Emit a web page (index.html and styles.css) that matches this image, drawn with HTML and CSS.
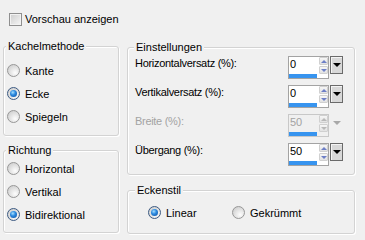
FILE: index.html
```html
<!DOCTYPE html>
<html lang="de">
<head>
    <meta charset="UTF-8">
    <title>Kacheln</title>
    <link rel="stylesheet" href="styles.css">
</head>
<body>
    <div class="dialog">
        <div class="check-row"><span class="check"></span>Vorschau anzeigen</div>

        <div class="panels">
            <div class="col-left">
                <div class="group group-tiling">
                    <span class="group-title">Kachelmethode</span>
                    <div class="radio-row"><span class="radio"></span>Kante</div>
                    <div class="radio-row"><span class="radio checked"></span>Ecke</div>
                    <div class="radio-row"><span class="radio"></span>Spiegeln</div>
                </div>
                <div class="group group-direction">
                    <span class="group-title">Richtung</span>
                    <div class="radio-row"><span class="radio"></span>Horizontal</div>
                    <div class="radio-row"><span class="radio"></span>Vertikal</div>
                    <div class="radio-row"><span class="radio checked"></span>Bidirektional</div>
                </div>
            </div>

            <div class="col-right">
                <div class="group group-settings">
                    <span class="group-title">Einstellungen</span>
                    <div class="field-row">
                        <span class="field-label">Horizontalversatz (%):</span>
                        <div class="spin">
                            <div class="spin-box">
                                <span class="spin-value">0</span>
                                <div class="spin-arrows"><span class="arrow-up"></span><span class="arrow-down"></span></div>
                                <div class="spin-bar"></div>
                            </div>
                            <span class="drop-btn"></span>
                        </div>
                    </div>
                    <div class="field-row">
                        <span class="field-label">Vertikalversatz (%):</span>
                        <div class="spin">
                            <div class="spin-box">
                                <span class="spin-value">0</span>
                                <div class="spin-arrows"><span class="arrow-up"></span><span class="arrow-down"></span></div>
                                <div class="spin-bar"></div>
                            </div>
                            <span class="drop-btn"></span>
                        </div>
                    </div>
                    <div class="field-row disabled">
                        <span class="field-label">Breite (%):</span>
                        <div class="spin">
                            <div class="spin-box">
                                <span class="spin-value">50</span>
                                <div class="spin-arrows"><span class="arrow-up"></span><span class="arrow-down"></span></div>
                                <div class="spin-bar"></div>
                            </div>
                            <span class="drop-btn"></span>
                        </div>
                    </div>
                    <div class="field-row">
                        <span class="field-label">Übergang (%):</span>
                        <div class="spin">
                            <div class="spin-box">
                                <span class="spin-value">50</span>
                                <div class="spin-arrows"><span class="arrow-up"></span><span class="arrow-down"></span></div>
                                <div class="spin-bar"></div>
                            </div>
                            <span class="drop-btn"></span>
                        </div>
                    </div>
                </div>

                <div class="group group-corner">
                    <span class="group-title">Eckenstil</span>
                    <div class="corner-row">
                        <div class="radio-row corner-item"><span class="radio checked"></span>Linear</div>
                        <div class="radio-row"><span class="radio"></span>Gekrümmt</div>
                    </div>
                </div>
            </div>
        </div>
    </div>
</body>
</html>
```

FILE: styles.css
```css
body {
    margin: 0;
    background: #f0f0f0;
    font-family: "Liberation Sans", Arial, sans-serif;
    font-size: 11px;
    color: #000;
}

.dialog {
    width: 365px;
    height: 240px;
    padding: 13px 0 0 3px;
    box-sizing: border-box;
}

/* Checkbox oben */
.check-row {
    display: flex;
    align-items: center;
    height: 13px;
    line-height: 13px;
    padding-left: 6px;
}

.check {
    width: 13px;
    height: 13px;
    box-sizing: border-box;
    border: 1px solid #8f8f8f;
    background: linear-gradient(135deg, #cdcdcd, #f6f6f6);
    box-shadow: inset 0 0 0 1px #f2f2f2;
    margin-right: 3px;
}

.panels {
    display: flex;
    gap: 8px;
    margin-top: 20px;
}

.col-left {
    width: 116px;
    display: flex;
    flex-direction: column;
    gap: 14px;
}

.col-right {
    width: 228px;
    padding-top: 1px;
    display: flex;
    flex-direction: column;
    gap: 15px;
}

/* Gruppenrahmen */
.group {
    position: relative;
    box-sizing: border-box;
    border: 1px solid #d3d3d3;
    border-radius: 3px;
    box-shadow: inset 1px 1px 0 #fff, 1px 1px 0 #fff;
}

.group-title {
    position: absolute;
    top: -7px;
    left: 2px;
    padding: 0 2px;
    line-height: 13px;
    background: #f0f0f0;
}

.group-settings .group-title {
    left: 6px;
}

.group-corner .group-title {
    left: 7px;
}

.group-tiling {
    height: 90px;
    padding: 12px 0 0 3px;
}

.group-direction {
    height: 83px;
    padding: 6px 0 0 3px;
}

.radio-row {
    display: flex;
    align-items: center;
    height: 23px;
}

.radio {
    position: relative;
    width: 13px;
    height: 13px;
    box-sizing: border-box;
    border-radius: 50%;
    border: 1px solid #979797;
    background: radial-gradient(circle at 65% 70%, #fdfdfd 0, #e4e4e4 45%, #c6c6c6 100%);
    margin-right: 5px;
}

.radio.checked {
    border-color: #3c5a82;
}

.radio.checked::after {
    content: "";
    position: absolute;
    left: 2px;
    top: 2px;
    width: 7px;
    height: 7px;
    border-radius: 50%;
    background: radial-gradient(circle at 40% 35%, #a6e0ff 0, #2c8ae0 40%, #0d4c9c 100%);
}

/* Einstellungen */
.group-settings {
    height: 128px;
    padding: 8px 11px 0 7px;
    display: flex;
    flex-direction: column;
    gap: 6px;
}

.field-row {
    display: flex;
    justify-content: space-between;
    height: 23px;
}

.field-label {
    line-height: 14px;
    letter-spacing: -0.3px;
}

.spin {
    display: flex;
    gap: 1px;
    align-items: flex-start;
}

.spin-box {
    width: 41px;
    height: 23px;
    box-sizing: border-box;
    border: 1px solid #a3a3a3;
    background: #fff;
    display: grid;
    grid-template-columns: 30px 9px;
    grid-template-rows: 17px 4px;
}

.spin-value {
    padding-left: 1px;
    line-height: 14px;
}

.spin-arrows {
    display: flex;
    flex-direction: column;
    gap: 1px;
}

.arrow-up,
.arrow-down {
    flex: 1;
    display: flex;
    align-items: center;
    justify-content: center;
    background: linear-gradient(#f6f6f6, #e2e2e2);
    border: 1px solid #d0d0d0;
    border-radius: 1px;
}

.arrow-up::after {
    content: "";
    border-left: 3px solid transparent;
    border-right: 3px solid transparent;
    border-bottom: 3px solid #6d7fc6;
}

.arrow-down::after {
    content: "";
    border-left: 3px solid transparent;
    border-right: 3px solid transparent;
    border-top: 3px solid #6d7fc6;
}

.spin-bar {
    grid-column: 1 / 3;
    width: 28px;
    background: #3794ef;
}

.drop-btn {
    width: 13px;
    height: 18px;
    box-sizing: border-box;
    border: 1px solid #6a6a6a;
    background: #d8d8d8;
    box-shadow: inset 1px 1px 0 #f4f4f4;
    display: flex;
    align-items: center;
    justify-content: center;
}

.drop-btn::after {
    content: "";
    border-left: 4px solid transparent;
    border-right: 4px solid transparent;
    border-top: 4px solid #000;
}

.disabled .field-label,
.disabled .spin-value {
    color: #a3a3a3;
}

.disabled .spin-box {
    border-color: #c8c8c8;
    background: #f0f0f0;
}

.disabled .arrow-up::after {
    border-bottom-color: #b8b8b8;
}

.disabled .arrow-down::after {
    border-top-color: #b8b8b8;
}

.disabled .drop-btn {
    border-color: transparent;
    background: none;
    box-shadow: none;
}

.disabled .drop-btn::after {
    border-top-color: #a8a8a8;
}

/* Eckenstil */
.group-corner {
    height: 44px;
    padding: 10px 0 0 20px;
}

.corner-row {
    display: flex;
}

.corner-item {
    width: 84px;
}
```
